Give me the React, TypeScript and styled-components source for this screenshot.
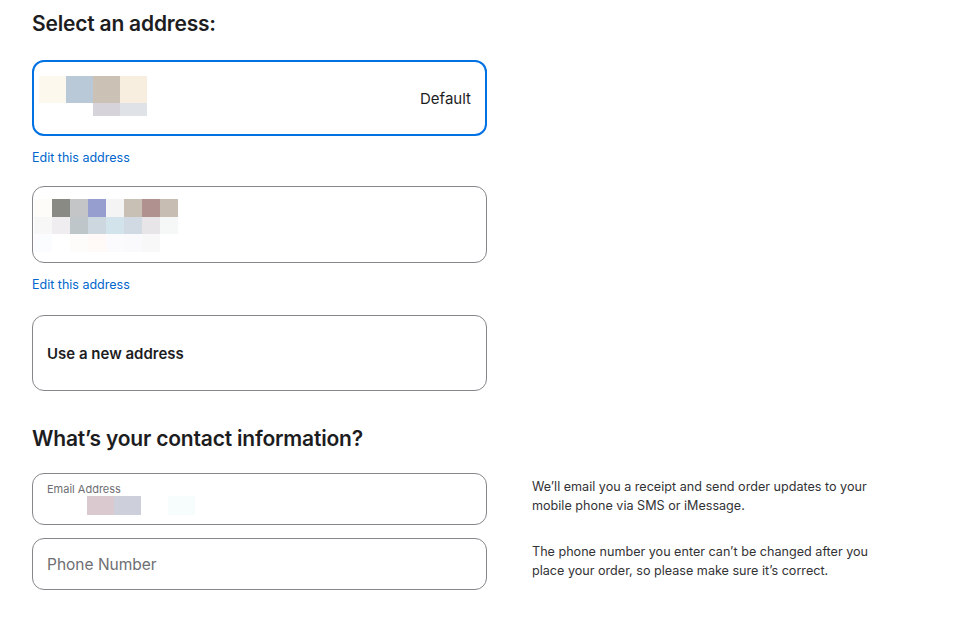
import React from 'react';
import styled, { createGlobalStyle } from 'styled-components';

const GlobalStyle = createGlobalStyle`
  body {
    margin: 0;
    background: #ffffff;
    font-family: Inter, "Liberation Sans", Arial, sans-serif;
    color: #1d1d1f;
  }
`;

const Page = styled.div`
  padding: 10px 32px 0;
  width: 966px;
  box-sizing: border-box;
`;

const Heading = styled.h2<{ $top?: number }>`
  margin: ${p => p.$top ?? 0}px 0 0;
  font-size: 21px;
  font-weight: 600;
  line-height: 28px;
  letter-spacing: -0.2px;
  color: #1d1d1f;
`;

const Column = styled.div`
  width: 455px;
  display: flex;
  flex-direction: column;
`;

const AddressCard = styled.div<{ $selected?: boolean; $height: number; $top: number }>`
  box-sizing: border-box;
  margin-top: ${p => p.$top}px;
  height: ${p => p.$height}px;
  border-radius: 12px;
  border: ${p => (p.$selected ? '2px solid #0071e3' : '1px solid #86868b')};
  padding: ${p => (p.$selected ? '14px 14px 0 5px' : '12px 0 0 1px')};
  display: flex;
  align-items: flex-start;
  justify-content: space-between;
`;

const NewAddressCard = styled.div`
  box-sizing: border-box;
  margin-top: 22px;
  height: 76px;
  border-radius: 12px;
  border: 1px solid #86868b;
  padding: 0 14px;
  display: flex;
  align-items: center;
  font-size: 15px;
  font-weight: 600;
  color: #1d1d1f;
`;

const DefaultTag = styled.span`
  align-self: center;
  margin-top: -14px;
  font-size: 15px;
  color: #1d1d1f;
`;

const EditLink = styled.a`
  margin-top: 14px;
  font-size: 12.5px;
  line-height: 16px;
  color: #0066cc;
  text-decoration: none;
  cursor: pointer;
`;

const Mosaic = styled.div<{ $cell: number; $rows: string; $cols: number }>`
  display: grid;
  grid-template-columns: repeat(${p => p.$cols}, ${p => p.$cell}px);
  grid-template-rows: ${p => p.$rows};
`;

const EmailMosaic = styled(Mosaic)`
  margin-left: 13px;
`;

const Pixel = styled.span<{ $c: string }>`
  background: ${p => p.$c};
`;

const ContactGrid = styled.div`
  margin-top: 20px;
  display: grid;
  grid-template-columns: 455px 380px;
  column-gap: 45px;
  row-gap: 13px;
`;

const Field = styled.div`
  box-sizing: border-box;
  height: 52px;
  border: 1px solid #86868b;
  border-radius: 12px;
  padding: 0 14px;
  display: flex;
  flex-direction: column;
  justify-content: center;
`;

const FieldLabel = styled.span`
  font-size: 11px;
  line-height: 14px;
  color: #6e6e73;
  margin-top: -2px;
`;

const Placeholder = styled.span`
  font-size: 15.5px;
  color: #6e6e73;
`;

const Note = styled.p`
  margin: 4px 0 0;
  font-size: 12.6px;
  line-height: 19px;
  color: #333336;
`;

const firstMosaic = [
  '#fdf8ee', '#b9c9d7', '#cbc1b5', '#f7eedf',
  'transparent', 'transparent', '#d6d4da', '#dfe2e6',
];

const secondMosaic = [
  '#fdfcf8', '#8a8a85', '#c3c5c7', '#969dcf', '#f4f4f4', '#c8bfb5', '#b09190', '#c7bdb3',
  '#f7f7f7', '#efedf0', '#bfc6c9', '#cdd7e0', '#d2e3ec', '#d1d9e2', '#e7e5e7', '#f6f7f7',
  '#fbfcff', '#ffffff', '#fefcfa', '#fffaf7', '#fbfbfd', '#faf9fb', '#f9f8f9', 'transparent',
];

const emailMosaic = ['transparent', '#dac9ce', '#cdd0da', 'transparent', '#f7fcfc'];

const App: React.FC = () => (
  <>
    <GlobalStyle />
    <Page>
      <Column>
        <Heading>Select an address:</Heading>
        <AddressCard $selected $height={76} $top={22}>
          <Mosaic $cell={27} $rows="27px 13px" $cols={4}>
            {firstMosaic.map((c, i) => <Pixel key={i} $c={c} />)}
          </Mosaic>
          <DefaultTag>Default</DefaultTag>
        </AddressCard>
        <EditLink>Edit this address</EditLink>
        <AddressCard $height={77} $top={20}>
          <Mosaic $cell={18} $rows="17.5px 17.5px 17.5px" $cols={8}>
            {secondMosaic.map((c, i) => <Pixel key={i} $c={c} />)}
          </Mosaic>
        </AddressCard>
        <EditLink>Edit this address</EditLink>
        <NewAddressCard>Use a new address</NewAddressCard>
        <Heading $top={34}>What’s your contact information?</Heading>
      </Column>
      <ContactGrid>
        <Field>
          <FieldLabel>Email Address</FieldLabel>
          <EmailMosaic $cell={27} $rows="19px" $cols={5}>
            {emailMosaic.map((c, i) => <Pixel key={i} $c={c} />)}
          </EmailMosaic>
        </Field>
        <Note>
          We’ll email you a receipt and send order updates to your
          <br />
          mobile phone via SMS or iMessage.
        </Note>
        <Field>
          <Placeholder>Phone Number</Placeholder>
        </Field>
        <Note>
          The phone number you enter can’t be changed after you
          <br />
          place your order, so please make sure it’s correct.
        </Note>
      </ContactGrid>
    </Page>
  </>
);

export default App;
